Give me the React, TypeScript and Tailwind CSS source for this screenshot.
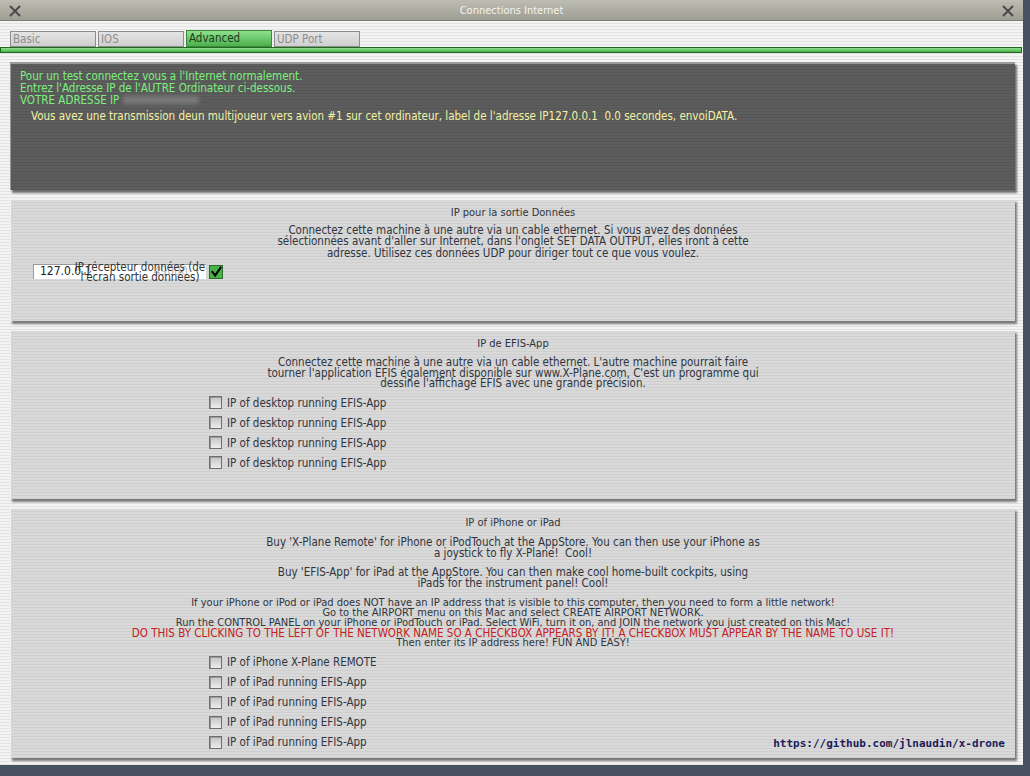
import React from "react";

const font = "font-['DejaVu_Sans_Condensed','DejaVu_Sans',sans-serif]";
const stripe =
  "bg-[repeating-linear-gradient(180deg,#f4f4f4_0px,#f4f4f4_2px,#e2e2e2_2px,#e2e2e2_3px)]";
const panelStripe =
  "bg-[repeating-linear-gradient(180deg,#d9d9d9_0px,#d9d9d9_2px,#cfcfcf_2px,#cfcfcf_3px)]";

function CloseX() {
  return (
    <svg width="12" height="12" viewBox="0 0 12 12">
      <path d="M1 1 L11 11 M11 1 L1 11" stroke="#4a4a4a" strokeWidth="2" />
    </svg>
  );
}

function Box() {
  return (
    <div className="w-[13px] h-[13px] shrink-0 border border-[#6e6e6e] bg-gradient-to-b from-[#c4c4c4] to-[#ededed] shadow-[inset_1px_1px_0_#9a9a9a]" />
  );
}

function CheckRow({ label }: { label: string }) {
  return (
    <div className="flex items-center gap-[5px] h-[20px]">
      <Box />
      <span>{label}</span>
    </div>
  );
}

function Panel({ className, children }: { className: string; children: React.ReactNode }) {
  return (
    <div
      className={`shrink-0 ${panelStripe} border-t border-l border-[#f2f2f2] shadow-[2px_3px_2px_#7a7a7a] text-[#2f3540] text-[11.5px] ${className}`}
    >
      {children}
    </div>
  );
}

function Tab({ label, active }: { label: string; active?: boolean }) {
  return active ? (
    <div className="w-[86px] h-[17px] px-[2px] border border-[#3d8a3d] bg-gradient-to-b from-[#8ee08e] to-[#4cb04c] text-[#17401a] leading-[15px] text-[11.5px]">
      {label}
    </div>
  ) : (
    <div className="w-[86px] h-[16px] px-[2px] border border-[#8c8c8c] bg-gradient-to-b from-[#e4e4e4] to-[#cfcfcf] text-[#8e8e8e] leading-[14px] text-[11.5px]">
      {label}
    </div>
  );
}

export default function App() {
  return (
    <div className={`w-[1030px] h-[776px] flex items-start bg-[#46525f] overflow-hidden ${font}`}>
      <div className={`w-[1023px] h-[765px] shrink-0 flex flex-col ${stripe}`}>
        {/* title bar */}
        <div className="h-[21px] shrink-0 flex items-center justify-between px-[9px] pt-[2px] bg-gradient-to-b from-[#bdbdb4] to-[#9d9d93] border-b border-[#7d7d75]">
          <CloseX />
          <span className="text-[11px] text-[#f4f4f0]">Connections Internet</span>
          <CloseX />
        </div>

        {/* tabs */}
        <div className="h-[26px] shrink-0 flex items-end gap-[2px] pl-[10px]">
          <Tab label="Basic" />
          <Tab label="IOS" />
          <Tab label="Advanced" active />
          <Tab label="UDP Port" />
        </div>
        <div className="h-[6px] shrink-0 mr-px border border-[#1f6a1f] bg-gradient-to-b from-[#8ee08e] to-[#4caf4c]" />

        <div className="flex flex-col gap-[9px] pt-[9px] pl-[10px] pr-[8px]">
          {/* dark status panel */}
          <div className="h-[128px] shrink-0 border-t-2 border-l border-[#9a9a9a] bg-[repeating-linear-gradient(180deg,#5d5d5d_0px,#5d5d5d_2px,#555555_2px,#555555_3px)] shadow-[2px_3px_2px_#6e6e6e] pt-[6px] pl-[9px] text-[11.5px] leading-[12px]">
            <div className="text-[#7df07d]">
              <p>Pour un test connectez vous a l'Internet normalement.</p>
              <p>Entrez l'Adresse IP de l'AUTRE Ordinateur ci-dessous.</p>
              <p className="flex items-center gap-[4px]">
                VOTRE ADRESSE IP
                <span className="inline-block w-[76px] h-[8px] bg-[#7a7a7a] blur-[2px]" />
              </p>
            </div>
            <p className="mt-[4px] pl-[11px] text-[#f2f2a6]">
              Vous avez une transmission deun multijoueur vers avion #1 sur cet ordinateur, label de l'adresse IP127.0.0.1&nbsp;&nbsp;0.0 secondes, envoiDATA.
            </p>
          </div>

          {/* IP pour la sortie Données */}
          <Panel className="h-[122px] leading-[11.5px]">
            <p className="text-center mt-[7px] text-[11px]">IP pour la sortie Données</p>
            <p className="text-center mt-[6px]">
              Connectez cette machine à une autre via un cable ethernet. Si vous avez des données
              <br />
              sélectionnées avant d'aller sur Internet, dans l'onglet SET DATA OUTPUT, elles iront à cette
              <br />
              adresse. Utilisez ces données UDP pour diriger tout ce que vous voulez.
            </p>
            <div className="flex items-center mt-[5px] ml-[22px] gap-[3px]">
              <div className="relative w-[173px] h-[15px] bg-white border-l border-t border-[#9a9a9a] flex items-center">
                <span className="pl-[6px] text-[12px] text-[#222]">127.0.0.1</span>
                <span className="ml-[62px] text-[12px] text-[#bcbcbc]">49000</span>
                <div className="absolute left-[38px] top-[-2px] w-[136px] text-center leading-[9.5px] text-[11.5px] text-[#333]">
                  IP récepteur données (de
                  <br />
                  l'écran sortie données)
                </div>
              </div>
              <div className="w-[14px] h-[14px] border border-[#2a6a2a] bg-[#46b446] flex items-center justify-center">
                <svg width="14" height="14" viewBox="0 0 14 14">
                  <path d="M2 6 L6 11 L13 1" stroke="#000" strokeWidth="2.4" fill="none" />
                </svg>
              </div>
            </div>
          </Panel>

          {/* IP de EFIS-App */}
          <Panel className="h-[169px] leading-[10.5px]">
            <p className="text-center mt-[7px] text-[11px] leading-[12px]">IP de EFIS-App</p>
            <p className="text-center mt-[7px]">
              Connectez cette machine à une autre via un cable ethernet. L'autre machine pourrait faire
              <br />
              tourner l'application EFIS également disponible sur www.X-Plane.com. C'est un programme qui
              <br />
              dessine l'affichage EFIS avec une grande précision.
            </p>
            <div className="mt-[4px] ml-[198px] flex flex-col leading-[12px]">
              <CheckRow label="IP of desktop running EFIS-App" />
              <CheckRow label="IP of desktop running EFIS-App" />
              <CheckRow label="IP of desktop running EFIS-App" />
              <CheckRow label="IP of desktop running EFIS-App" />
            </div>
          </Panel>

          {/* IP of iPhone or iPad */}
          <Panel className="h-[250px] flex flex-col leading-[11px]">
            <p className="text-center mt-[8px] text-[11px] leading-[12px]">IP of iPhone or iPad</p>
            <p className="text-center mt-[8px]">
              Buy 'X-Plane Remote' for iPhone or iPodTouch at the AppStore. You can then use your iPhone as
              <br />
              a joystick to fly X-Plane!&nbsp; Cool!
            </p>
            <p className="text-center mt-[8px]">
              Buy 'EFIS-App' for iPad at the AppStore. You can then make cool home-built cockpits, using
              <br />
              iPads for the instrument panel! Cool!
            </p>
            <div className="text-center mt-[9px] leading-[10px] text-[11px]">
              <p>If your iPhone or iPod or iPad does NOT have an IP address that is visible to this computer, then you need to form a little network!</p>
              <p>Go to the AIRPORT menu on this Mac and select CREATE AIRPORT NETWORK.</p>
              <p>Run the CONTROL PANEL on your iPhone or iPodTouch or iPad. Select WiFi, turn it on, and JOIN the network you just created on this Mac!</p>
              <p className="text-[#c42020] text-[11.5px]">DO THIS BY CLICKING TO THE LEFT OF THE NETWORK NAME SO A CHECKBOX APPEARS BY IT! A CHECKBOX MUST APPEAR BY THE NAME TO USE IT!</p>
              <p>Then enter its IP address here! FUN AND EASY!</p>
            </div>
            <div className="flex items-end">
              <div className="mt-[4px] ml-[198px] flex flex-col leading-[12px]">
                <CheckRow label="IP of iPhone X-Plane REMOTE" />
                <CheckRow label="IP of iPad running EFIS-App" />
                <CheckRow label="IP of iPad running EFIS-App" />
                <CheckRow label="IP of iPad running EFIS-App" />
                <CheckRow label="IP of iPad running EFIS-App" />
              </div>
              <span className="ml-auto mr-[10px] mb-[3px] font-['DejaVu_Sans_Mono',monospace] font-bold text-[11px] text-[#1c1c5a]">
                https://github.com/jlnaudin/x-drone
              </span>
            </div>
          </Panel>
        </div>
      </div>
    </div>
  );
}
